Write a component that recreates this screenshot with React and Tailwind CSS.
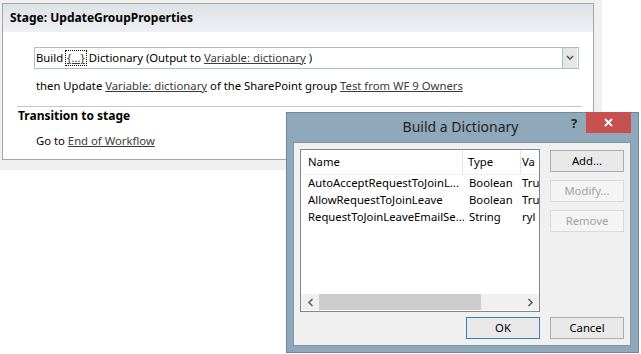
import React from 'react';

const FONT = { fontFamily: '"Noto Sans", "Open Sans", sans-serif' };

function Link({ children }) {
  return <span className="underline text-[#3b3b3b] decoration-[#3b3b3b]">{children}</span>;
}

function Btn({ children, disabled, primary }) {
  return (
    <div
      className={`w-[74px] h-[22px] flex items-center justify-center border text-[11.3px] ${
        disabled
          ? 'border-[#d9d9d9] bg-[#f4f4f4] text-[#a3a3a3]'
          : primary
          ? 'border-[#3c7fb1] bg-[#e9e9e9] text-black'
          : 'border-[#adadad] bg-[#e9e9e9] text-black'
      }`}
    >
      {children}
    </div>
  );
}

const rows = [
  ['AutoAcceptRequestToJoinL...', 'Boolean', 'Tru'],
  ['AllowRequestToJoinLeave', 'Boolean', 'Tru'],
  ['RequestToJoinLeaveEmailSe...', 'String', 'ryl'],
];

function Dialog() {
  return (
    <div className="absolute left-[286px] top-[112px] w-[353px] h-[241px] bg-[#8fa9ba] border border-[#6e8799] flex flex-col">
      {/* title bar */}
      <div className="h-[29px] relative flex items-center justify-center">
        <span className="text-[14px] text-[#1f1f1f] ml-[-4px] mt-[-2px]">Build a Dictionary</span>
        <span className="absolute left-[284px] top-[1px] text-[13px] font-bold text-[#222]">?</span>
        <div className="absolute left-[299px] top-[-1px] w-[45px] h-[21px] bg-[#c75050] flex items-center justify-center">
          <svg width="9" height="9" viewBox="0 0 9 9">
            <path d="M1 1L8 8M8 1L1 8" stroke="#fff" strokeWidth="1.8" />
          </svg>
        </div>
      </div>
      {/* client */}
      <div className="ml-[6px] w-[338px] h-[204px] bg-[#f0f0f0] border border-[#7f95a6] flex flex-col pt-[6px] pl-[6px]">
        <div className="flex">
          <div className="w-[240px] h-[163px] border border-[#828790] bg-white flex flex-col">
            <div className="h-[25px] flex text-[11.3px] text-black border-b border-[#f0f0f0]">
              <div className="w-[162px] pl-[7px] flex items-center border-r border-[#e5e5e5]">Name</div>
              <div className="w-[58px] pl-[5px] flex items-center border-r border-[#e5e5e5]">Type</div>
              <div className="flex-1 pl-[1px] flex items-center overflow-hidden">Va</div>
            </div>
            <div className="flex-1 text-[11.3px] text-black">
              {rows.map(([n, t, v]) => (
                <div key={n} className="h-[17px] flex items-center">
                  <div className="w-[163px] pl-[7px] whitespace-nowrap overflow-hidden">{n}</div>
                  <div className="w-[58px] pl-[5px]">{t}</div>
                  <div className="flex-1 overflow-hidden whitespace-nowrap">{v}</div>
                </div>
              ))}
            </div>
            <div className="h-[16px] mb-[1px] flex items-center bg-[#f0f0f0]">
              <div className="w-[18px] flex items-center justify-center">
                <svg width="7" height="9" viewBox="0 0 7 9">
                  <path d="M5.5 1L2 4.5L5.5 8" stroke="#606060" strokeWidth="1.6" fill="none" />
                </svg>
              </div>
              <div className="w-[162px] h-[16px] bg-[#cdcdcd]" />
              <div className="flex-1" />
              <div className="w-[18px] flex items-center justify-center">
                <svg width="7" height="9" viewBox="0 0 7 9">
                  <path d="M1.5 1L5 4.5L1.5 8" stroke="#606060" strokeWidth="1.6" fill="none" />
                </svg>
              </div>
            </div>
          </div>
          <div className="ml-[10px] flex flex-col gap-[8px] pt-[1px]">
            <Btn>Add...</Btn>
            <Btn disabled>Modify...</Btn>
            <Btn disabled>Remove</Btn>
          </div>
        </div>
        <div className="flex mt-[5px] ml-[166px] gap-[10px]">
          <Btn primary>OK</Btn>
          <Btn>Cancel</Btn>
        </div>
      </div>
    </div>
  );
}

export default function App() {
  return (
    <div className="relative w-[641px] h-[354px] bg-white overflow-hidden text-black" style={FONT}>
      <div className="w-[602px] h-[170px] bg-[#f0f0f0] pt-[3px] pl-[2px]">
        <div className="w-[592px] h-[157px] border border-[#a5a5a5] bg-white flex flex-col text-[11.3px]">
          {/* header */}
          <div className="h-[28px] shrink-0 bg-gradient-to-b from-[#dde2e8] to-[#eef0f3] flex items-center pl-[7px]">
            <span className="text-[12px] font-bold text-black">Stage: UpdateGroupProperties</span>
          </div>
          {/* action */}
          <div className="ml-[31px] mt-[15px] w-[545px] h-[22px] shrink-0 border border-[#a7bfd3] flex items-center">
            <div className="flex-1 pl-[1px] flex items-center whitespace-nowrap">
              Build
              <span className="mx-[2px] px-[1px] border border-dotted border-black leading-[14px]">
                <Link>{'{...}'}</Link>
              </span>
              Dictionary (Output to&nbsp;<Link>Variable: dictionary</Link>&nbsp;)
            </div>
            <div className="w-[15px] h-[20px] mr-[1px] bg-[#e6e6e6] border-l border-[#a7bfd3] flex items-center justify-center">
              <svg width="8" height="6" viewBox="0 0 8 6">
                <path d="M1 1L4 4.2L7 1" stroke="#555" strokeWidth="1.6" fill="none" />
              </svg>
            </div>
          </div>
          <div className="ml-[33px] mt-[9px] h-[17px] flex items-center whitespace-nowrap">
            then Update&nbsp;<Link>Variable: dictionary</Link>&nbsp;of the SharePoint group&nbsp;<Link>Test from WF 9 Owners</Link>
          </div>
          <div className="ml-[14px] w-[565px] mt-[11px] border-t border-[#c8c8c8]" />
          <div className="ml-[15px] h-[17px] flex items-center text-[12px] font-bold">Transition to stage</div>
          <div className="ml-[33px] mt-[9px] h-[17px] flex items-center">
            Go to&nbsp;<Link>End of Workflow</Link>
          </div>
        </div>
      </div>
      <Dialog />
    </div>
  );
}
